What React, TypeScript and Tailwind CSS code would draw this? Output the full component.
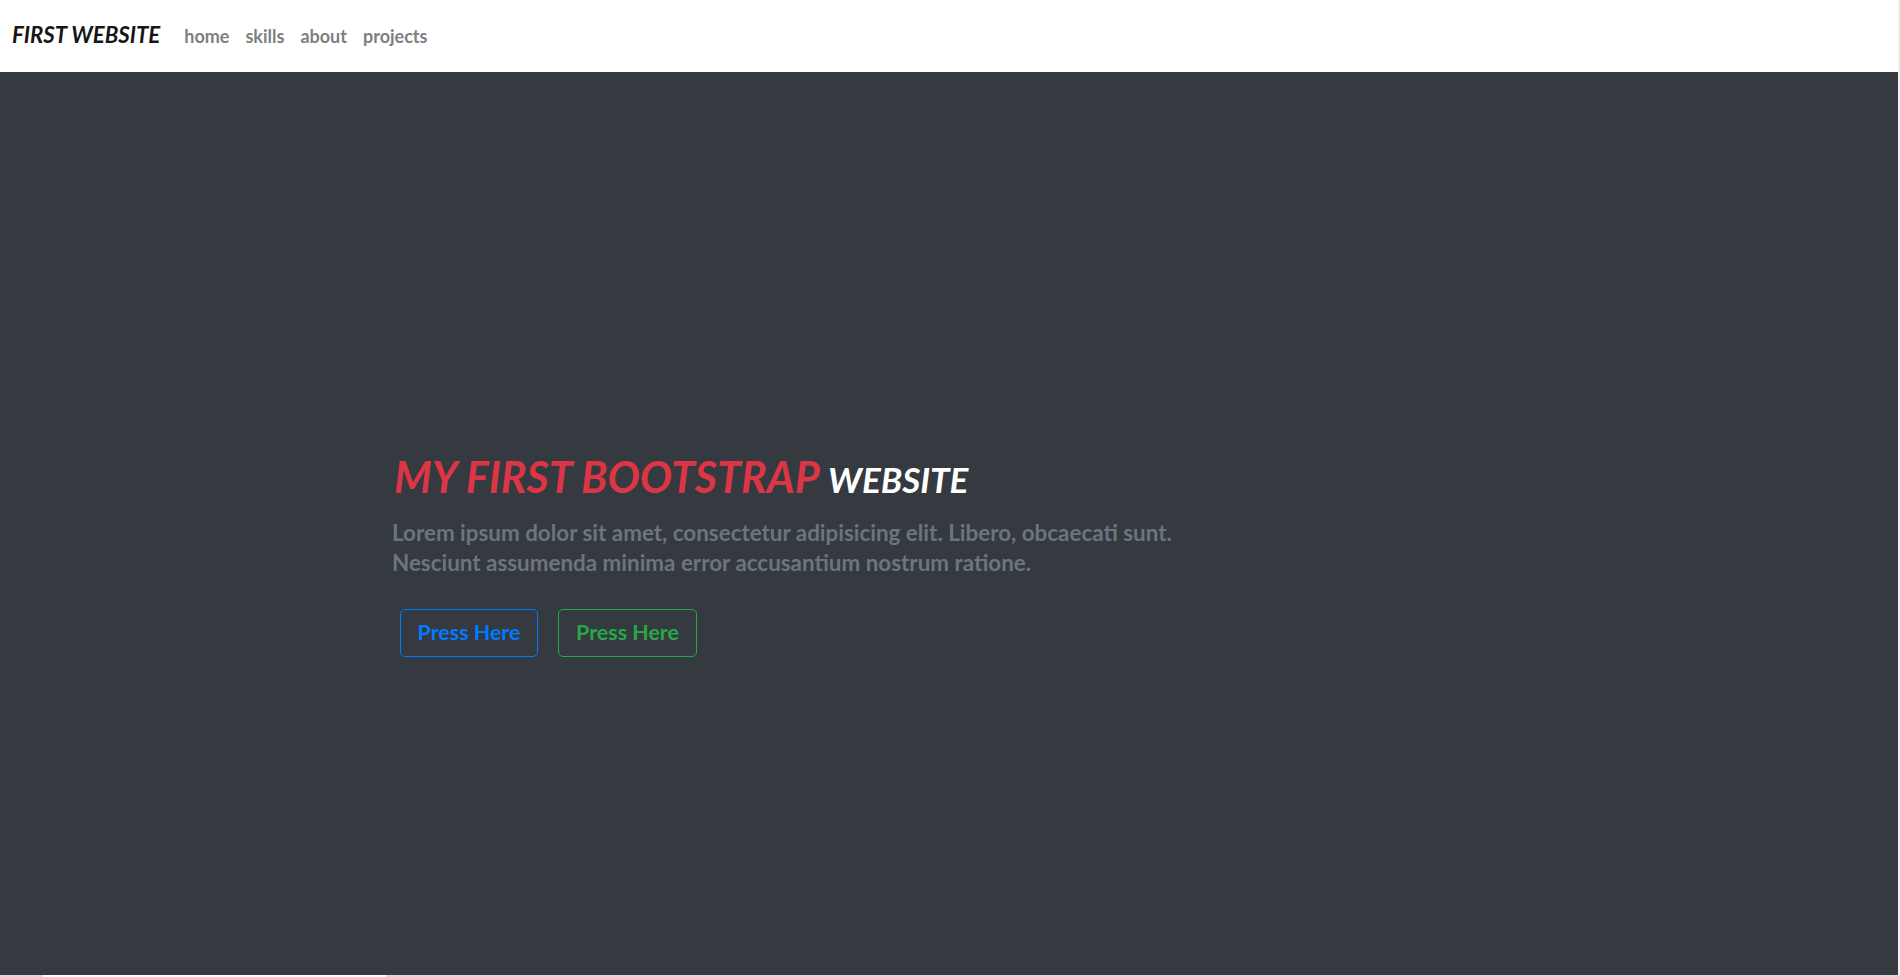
import React from "react";

export default function App() {
  return (
    <div className="flex h-[977px] w-full flex-col overflow-hidden bg-[#343a40] font-['Lato',sans-serif]">
      <div className="flex min-h-0 flex-1">
        <div className="flex min-w-0 flex-1 flex-col">
          <nav className="flex h-[72px] items-center bg-white pb-[1px] pl-[12px]">
            <div className="flex items-baseline">
              <a className="text-[22.2px] font-bold italic leading-[1.2] text-[#161616]">FIRST WEBSITE</a>
              <ul className="ml-[24px] flex items-baseline gap-[16px] text-[18px] font-bold leading-[1.2] text-[#7f7f7f]">
                <li>home</li>
                <li>skills</li>
                <li>about</li>
                <li>projects</li>
              </ul>
            </div>
          </nav>
          <main className="flex-1 bg-[#343a40] pt-[379px]">
            <div className="mx-auto w-[1140px] px-[15px]">
              <h1 className="text-[43px] font-bold italic leading-[52px] text-[#dc3545]">
                MY FIRST BOOTSTRAP <span className="text-[35px] text-white">WEBSITE</span>
              </h1>
              <p className="-ml-[2px] mt-[13px] text-[22.4px] font-bold leading-[30px] text-[#6c757d]">
                Lorem ipsum dolor sit amet, consectetur adipisicing elit. Libero, obcaecati sunt.
                <br />
                Nesciunt assumenda minima error accusantium nostrum ratione.
              </p>
              <div className="ml-[6px] mt-[31px] flex gap-[20px]">
                <button className="flex h-[48px] w-[138px] items-center justify-center rounded-[5px] border border-[#007bff] text-[21.4px] font-bold leading-[1.2] text-[#007bff]">
                  Press Here
                </button>
                <button className="flex h-[48px] w-[139px] items-center justify-center rounded-[5px] border border-[#28a745] text-[21.4px] font-bold leading-[1.2] text-[#28a745]">
                  Press Here
                </button>
              </div>
            </div>
          </main>
        </div>
        <div className="w-[2px] bg-[#f0f0f0]" />
      </div>
      <div className="flex h-[2px] bg-[#dadada]">
        <div className="ml-[43px] w-[343px] bg-white" />
      </div>
    </div>
  );
}
